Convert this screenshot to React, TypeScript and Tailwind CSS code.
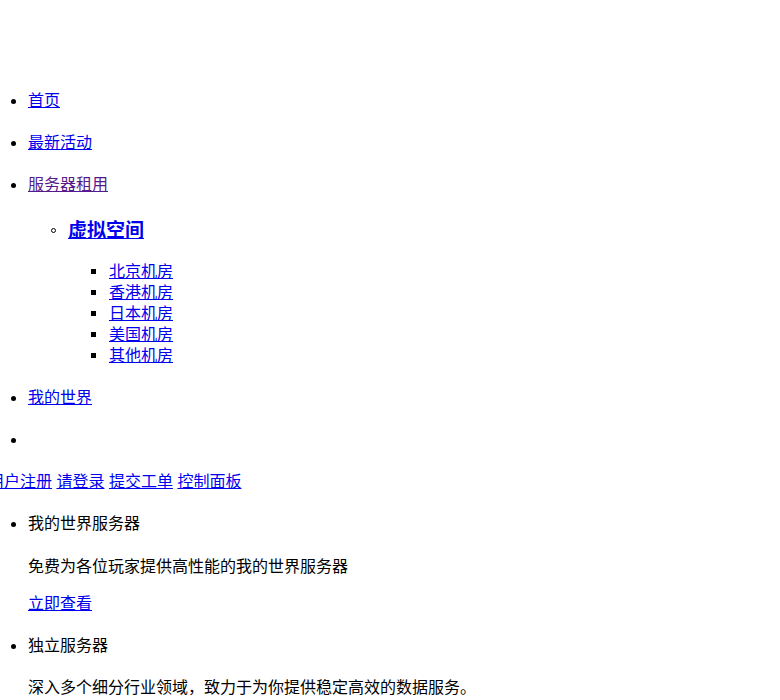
import React from 'react';

const font = "font-['Liberation_Sans','Noto_Sans_CJK_SC',sans-serif]";
const link = 'text-[#0000ee] underline';

function Disc() {
  return <span className="mr-[12px] ml-[11px] inline-block h-[5px] w-[5px] shrink-0 rounded-full bg-black" />;
}

function Row({ h, children, className = '' }: { h: string; children?: React.ReactNode; className?: string }) {
  return <div className={`flex items-center ${h} ${className}`}>{children}</div>;
}

const rooms = ['北京机房', '香港机房', '日本机房', '美国机房', '其他机房'];

export default function App() {
  return (
    <div className={`min-h-[700px] overflow-hidden bg-white pt-[80px] text-[16px] leading-none text-black ${font}`}>
      <Row h="h-[42px]">
        <Disc />
        <a href="#" className={link}>首页</a>
      </Row>
      <Row h="h-[42px]">
        <Disc />
        <a href="#" className={link}>最新活动</a>
      </Row>
      <Row h="h-[42px]">
        <Disc />
        <a href="#" className="text-[#551a8b] underline">服务器租用</a>
      </Row>

      <Row h="h-[48px]" className="pl-[51px]">
        <span className="mr-[12px] inline-block h-[5px] w-[5px] shrink-0 rounded-full border border-black" />
        <a href="#" className={`${link} text-[19px] font-bold`}>虚拟空间</a>
      </Row>
      <div className="mt-[7px] flex flex-col pl-[91px]">
        {rooms.map(r => (
          <Row key={r} h="h-[21px]">
            <span className="mr-[13px] inline-block h-[5px] w-[5px] shrink-0 bg-black" />
            <a href="#" className={link}>{r}</a>
          </Row>
        ))}
      </div>

      <Row h="h-[42px]" className="mt-[11px]">
        <Disc />
        <a href="#" className={link}>我的世界</a>
      </Row>
      <Row h="h-[42px]">
        <Disc />
      </Row>

      <Row h="h-[42px]" className="ml-[-12px]">
        <span className="whitespace-pre">
          <a href="#" className={link}>用户注册</a>{' '}
          <a href="#" className={link}>请登录</a>{' '}
          <a href="#" className={link}>提交工单</a>{' '}
          <a href="#" className={link}>控制面板</a>
        </span>
      </Row>

      <Row h="h-[42px]">
        <Disc />
        <span>我的世界服务器</span>
      </Row>
      <Row h="h-[44px]" className="pl-[28px]">
        <p>免费为各位玩家提供高性能的我的世界服务器</p>
      </Row>
      <Row h="h-[30px]" className="pl-[28px]">
        <a href="#" className={link}>立即查看</a>
      </Row>
      <Row h="h-[54px]">
        <Disc />
        <span>独立服务器</span>
      </Row>
      <Row h="h-[30px]" className="pl-[28px]">
        <p>深入多个细分行业领域，致力于为你提供稳定高效的数据服务。</p>
      </Row>
    </div>
  );
}
